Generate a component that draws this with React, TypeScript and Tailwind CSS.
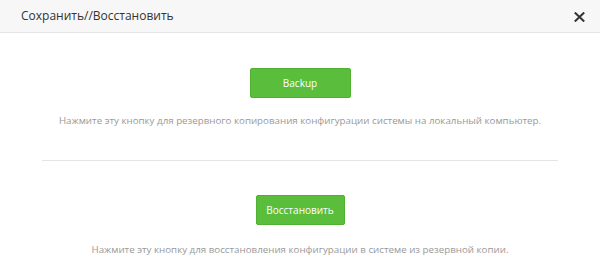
import React from "react";

export default function App() {
  return (
    <div className="w-[600px] h-[272px] bg-white overflow-hidden" style={{ fontFamily: '"Open Sans", "Noto Sans", sans-serif' }}>
      <div className="h-[33px] bg-[#f7f7f7] border-b border-[#e5e5e5] flex items-center justify-between pl-[21px] pr-[15px]">
        <span className="text-[12px] text-[#333]">Сохранить//Восстановить</span>
        <svg width="11" height="10" viewBox="0 0 11 10" className="mt-[2px]">
          <path d="M0.8 0.5 L10.2 9.5 M10.2 0.5 L0.8 9.5" stroke="#333" strokeWidth="2" />
        </svg>
      </div>
      <div className="flex flex-col items-center pt-[35px]">
        <button className="w-[101px] h-[30px] bg-[#5bbd3c] border border-[#4fb032] rounded-[2px] text-white text-[10px]">Backup</button>
        <p className="mt-[16px] text-[9.75px] text-[#999] leading-[14px]">Нажмите эту кнопку для резервного копирования конфигурации системы на локальный компьютер.</p>
        <div className="mt-[32px] w-[516px] h-px bg-[#e5e5e5]" />
        <button className="mt-[34px] w-[89px] h-[30px] bg-[#5bbd3c] border border-[#4fb032] rounded-[2px] text-white text-[10px]">Восстановить</button>
        <p className="mt-[18px] text-[9.75px] text-[#999] leading-[14px]">Нажмите эту кнопку для восстановления конфигурации в системе из резервной копии.</p>
      </div>
    </div>
  );
}
